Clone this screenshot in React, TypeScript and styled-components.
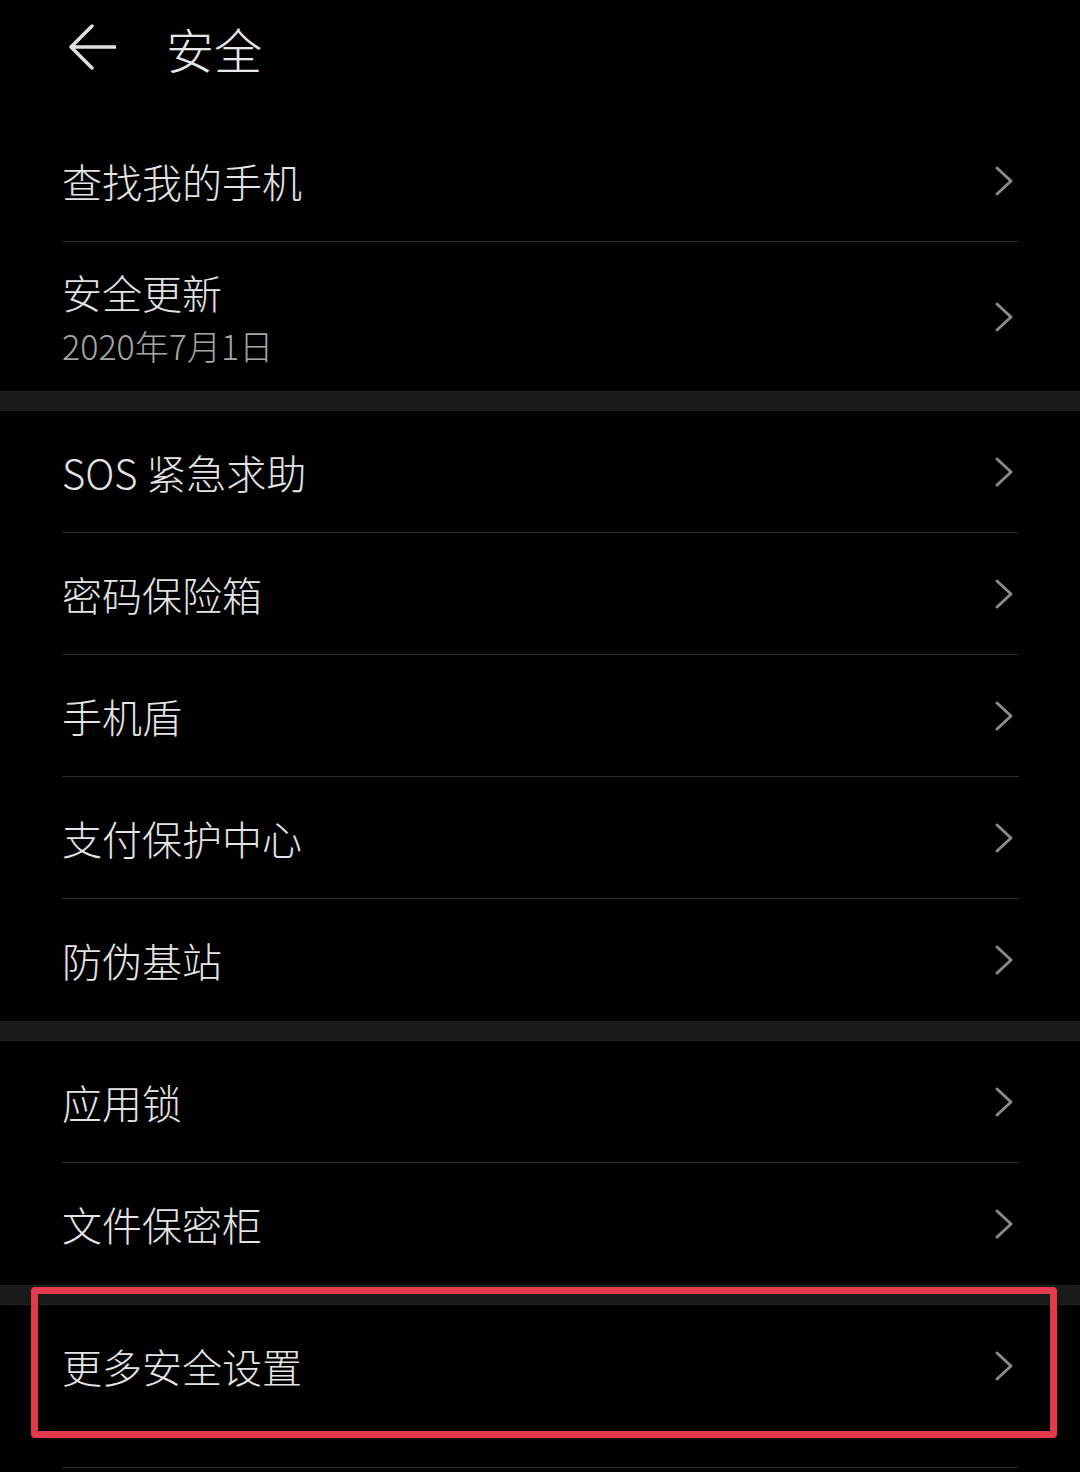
import React from "react";
import styled, { createGlobalStyle } from "styled-components";

const Global = createGlobalStyle`
  html, body { margin: 0; padding: 0; background: #000; }
  body { font-family: "Noto Sans CJK SC", "Noto Sans", sans-serif; }
  * { box-sizing: border-box; }
`;

const Page = styled.div`
  width: 1080px;
  min-height: 1472px;
  background: #000;
  display: flex;
  flex-direction: column;
  overflow: hidden;
`;

const Header = styled.header`
  height: 120px;
  padding: 0 0 24px 68px;
  display: flex;
  align-items: center;
  gap: 50px;
`;

const Title = styled.h1`
  margin: 0;
  font-size: 48px;
  font-weight: 300;
  line-height: 1;
  color: #e6e6e6;
`;

const Group = styled.section`
  position: relative;
  display: flex;
  flex-direction: column;
`;

const Band = styled.div`
  height: 20px;
  background: #1a1a1a;
  border-top: 1px solid #222;
  border-bottom: 1px solid #222;
`;

const Row = styled.div<{ $tall?: boolean }>`
  height: ${(p) => (p.$tall ? 149 : 122)}px;
  margin: 0 61px 0 62px;
  display: flex;
  align-items: center;
  justify-content: space-between;
  border-bottom: 1px solid #2c2c2c;
  &:last-of-type { border-bottom: none; }
`;

const TextCol = styled.div`
  display: flex;
  flex-direction: column;
  gap: 10px;
`;

const Label = styled.span`
  font-size: 40px;
  font-weight: 300;
  line-height: 48px;
  color: #e4e4e4;
  white-space: nowrap;
`;

const Sub = styled.span`
  font-size: 34px;
  font-weight: 300;
  line-height: 40px;
  color: #a6a6a6;
`;

const Chevron = styled.svg`
  width: 20px;
  height: 32px;
  margin-right: 5px;
  flex: none;
`;

const Highlight = styled.span`
  position: absolute;
  display: block;
  left: 31px;
  top: -18px;
  width: 1026px;
  height: 151px;
  border: 7px solid #e23a4b;
  border-radius: 4px;
  pointer-events: none;
`;

const Trail = styled.div`
  margin: 40px 61px 0 62px;
  height: 1px;
  background: #2c2c2c;
`;

const Arrow = () => (
  <svg width="48" height="48" viewBox="0 0 48 48" fill="none">
    <path
      d="M3 23H47M24 2L3 23L24 44"
      stroke="#e0e0e0"
      strokeWidth="3.5"
      strokeLinecap="round"
      strokeLinejoin="round"
    />
  </svg>
);

const Chev = () => (
  <Chevron viewBox="0 0 20 32" fill="none">
    <path d="M3 3L17 16L3 29" stroke="#8a8a8a" strokeWidth="3" strokeLinecap="round" strokeLinejoin="round" />
  </Chevron>
);

type ItemData = { label: string; sub?: string };

const Item = ({ label, sub }: ItemData) => (
  <Row $tall={!!sub}>
    <TextCol>
      <Label>{label}</Label>
      {sub && <Sub>{sub}</Sub>}
    </TextCol>
    <Chev />
  </Row>
);

const groups: ItemData[][] = [
  [{ label: "查找我的手机" }, { label: "安全更新", sub: "2020年7月1日" }],
  [
    { label: "SOS 紧急求助" },
    { label: "密码保险箱" },
    { label: "手机盾" },
    { label: "支付保护中心" },
    { label: "防伪基站" },
  ],
  [{ label: "应用锁" }, { label: "文件保密柜" }],
];

export default function App() {
  return (
    <Page>
      <Global />
      <Header>
        <Arrow />
        <Title>安全</Title>
      </Header>
      {groups.map((g, i) => (
        <React.Fragment key={i}>
          {i > 0 && <Band />}
          <Group>
            {g.map((it) => (
              <Item key={it.label} {...it} />
            ))}
          </Group>
        </React.Fragment>
      ))}
      <Band />
      <Group>
        <Item label="更多安全设置" />
        <Highlight />
      </Group>
      <Trail />
    </Page>
  );
}
